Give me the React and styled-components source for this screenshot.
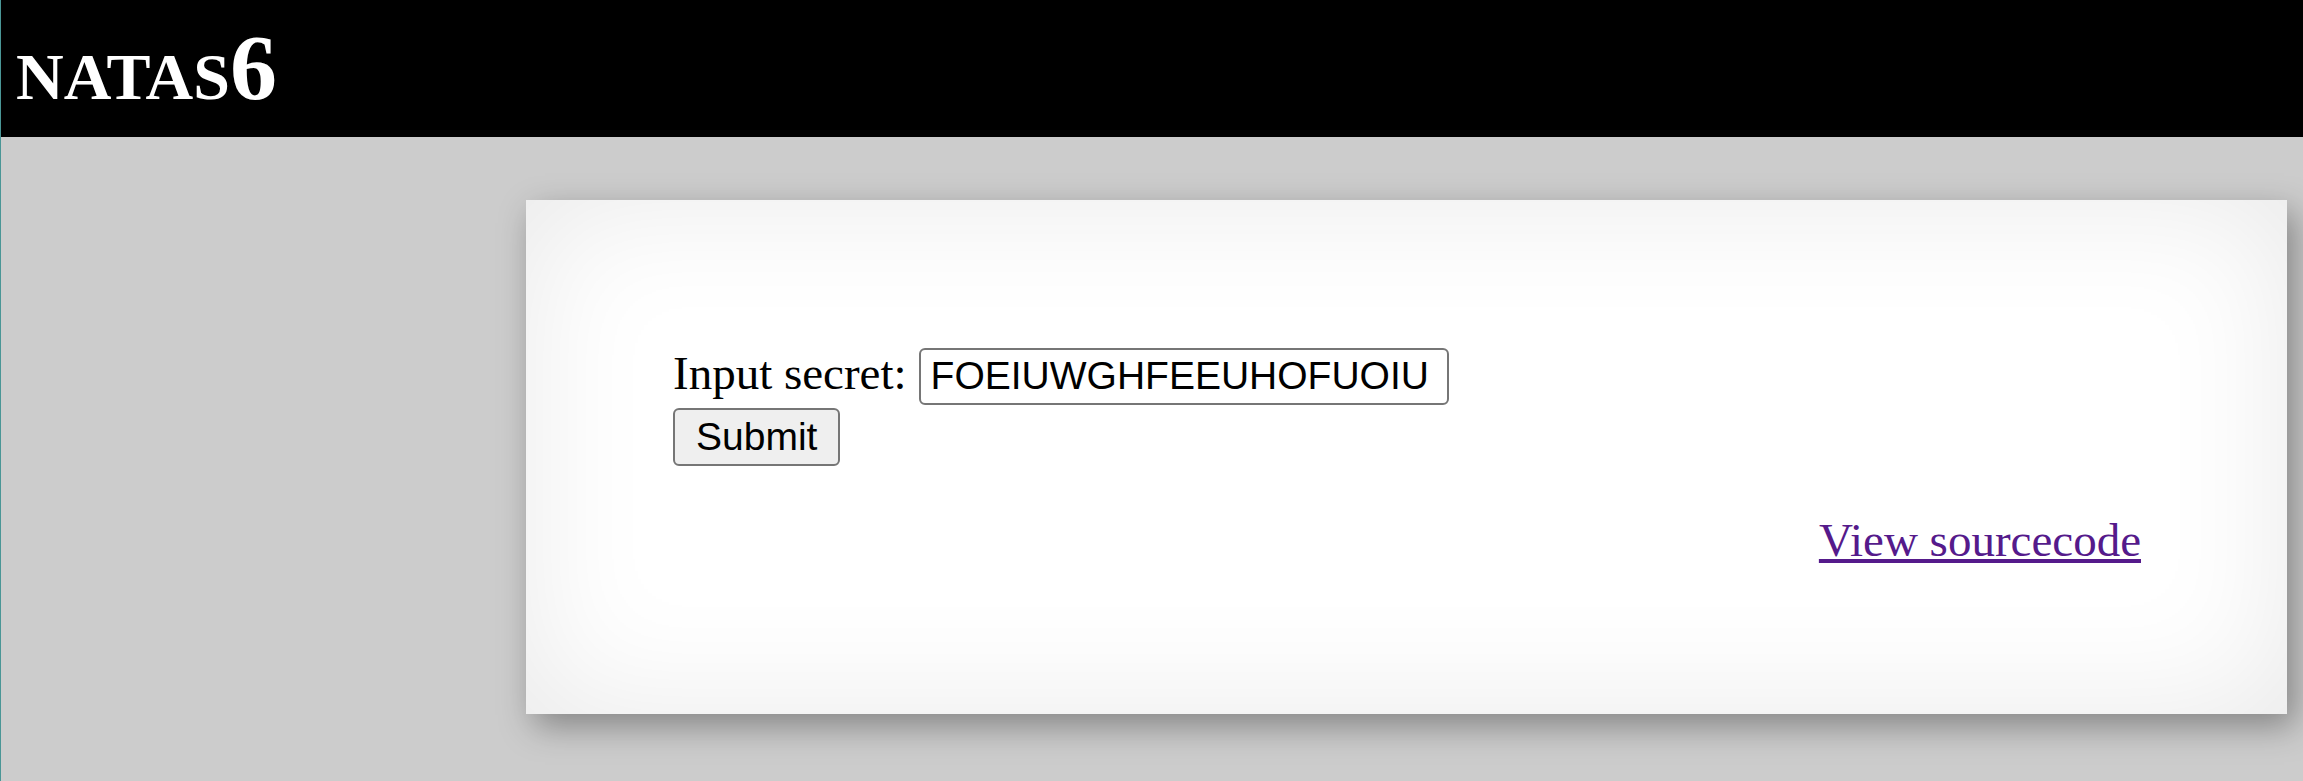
import React from "react";
import styled, { createGlobalStyle } from "styled-components";

const GlobalStyle = createGlobalStyle`
    html, body {
        margin: 0;
        padding: 0;
        background: #ccc;
    }
    body {
        font-family: "Liberation Serif", "Times New Roman", serif;
        font-size: 47px;
        color: black;
    }
`;

const Page = styled.div`
    min-height: 100vh;
    border-left: 1px solid #4a9696;
    box-sizing: border-box;
    background: #ccc;
    overflow: hidden;
`;

const Title = styled.h1`
    margin: 0;
    height: 137px;
    box-sizing: border-box;
    padding: 13px 15px 0 15px;
    background: black;
    color: white;
    font-family: "Liberation Serif", "Times New Roman", serif;
    font-size: 94px;
    font-weight: bold;
    font-variant: small-caps;
    line-height: normal;
`;

const Card = styled.div`
    width: 1761px;
    box-sizing: border-box;
    margin: 63px 0 0 525px;
    padding: 146px 146px 147px 147px;
    background: white;
    box-shadow: inset 0 0 130px rgba(0, 0, 0, 0.09), 8px 12px 32px rgba(0, 0, 0, 0.35);
`;

const Form = styled.form`
    display: flex;
    flex-direction: column;
    align-items: flex-start;
    gap: 3px;
    margin: 0;
`;

const Row = styled.div`
    display: flex;
    align-items: baseline;
    gap: 12px;
`;

const Label = styled.label`
    line-height: normal;
`;

const SecretInput = styled.input`
    width: 530px;
    height: 57px;
    box-sizing: border-box;
    padding: 0 10px;
    border: 2px solid #767676;
    border-radius: 6px;
    background: white;
    font-family: "Liberation Sans", Arial, sans-serif;
    font-size: 39px;
    color: black;
    outline: none;
`;

const SubmitButton = styled.button`
    height: 58px;
    box-sizing: border-box;
    padding: 0 21px;
    border: 2px solid #767676;
    border-radius: 6px;
    background: #efefef;
    font-family: "Liberation Sans", Arial, sans-serif;
    font-size: 39px;
    color: black;
`;

const SourceLine = styled.div`
    margin-top: 47px;
    text-align: right;
    line-height: normal;
`;

const SourceLink = styled.a`
    color: #551a8b;
    text-decoration: underline;
`;

export default function App() {
    return (
        <Page>
            <GlobalStyle />
            <Title>natas6</Title>
            <Card>
                <Form onSubmit={e => e.preventDefault()}>
                    <Row>
                        <Label htmlFor="secret">Input secret:</Label>
                        <SecretInput id="secret" name="secret" defaultValue="FOEIUWGHFEEUHOFUOIU" />
                    </Row>
                    <SubmitButton type="submit">Submit</SubmitButton>
                </Form>
                <SourceLine>
                    <SourceLink href="#">View sourcecode</SourceLink>
                </SourceLine>
            </Card>
        </Page>
    );
}
